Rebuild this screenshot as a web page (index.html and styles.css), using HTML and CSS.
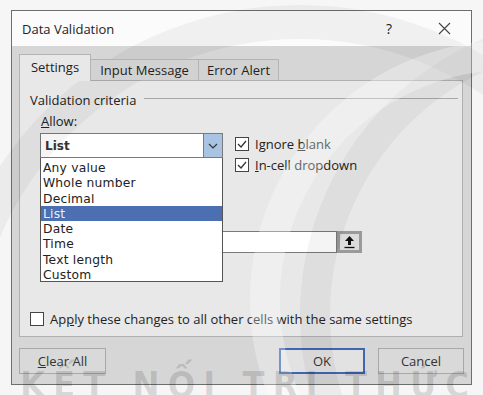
FILE: index.html
```html
<!DOCTYPE html>
<html>
<head>
<meta charset="utf-8">
<title>Data Validation</title>
<link rel="stylesheet" href="styles.css">
</head>
<body>
<div class="page">
<div class="dialog">
  <div class="titlebar">
    <span class="title">Data Validation</span>
    <span class="help">?</span>
    <span class="close"><svg width="13" height="13" viewBox="0 0 13 13"><path d="M1 1L12 12M12 1L1 12" stroke="#444" stroke-width="1.1" fill="none"/></svg></span>
  </div>
  <div class="body">
    <div class="tabs">
      <div class="tab active">Settings</div>
      <div class="tab">Input Message</div>
      <div class="tab">Error Alert</div>
    </div>
    <div class="panel">
      <div class="group-head"><span class="group-title">Validation criteria</span><span class="rule"></span></div>
      <div class="allow-label"><u>A</u>llow:</div>
      <div class="allow-row">
        <div class="combo-wrap">
          <div class="combo">
            <span class="combo-text">List</span>
            <span class="combo-btn"><svg width="10" height="6" viewBox="0 0 10 6"><path d="M1 1L5 5L9 1" stroke="#333" stroke-width="1.2" fill="none"/></svg></span>
          </div>
          <ul class="list">
            <li>Any value</li>
            <li>Whole number</li>
            <li>Decimal</li>
            <li class="sel">List</li>
            <li>Date</li>
            <li>Time</li>
            <li>Text length</li>
            <li>Custom</li>
          </ul>
        </div>
        <div class="checks">
          <div class="check"><span class="box"><svg width="12" height="12" viewBox="0 0 12 12"><path d="M2 6L5 9L10 3" stroke="#333" stroke-width="1.3" fill="none"/></svg></span><span>Ignore <u>b</u>lank</span></div>
          <div class="check"><span class="box"><svg width="12" height="12" viewBox="0 0 12 12"><path d="M2 6L5 9L10 3" stroke="#333" stroke-width="1.3" fill="none"/></svg></span><span><u>I</u>n-cell dropdown</span></div>
        </div>
      </div>
      <div class="source-row">
        <div class="source-input"></div>
        <div class="ref-btn"><svg width="13" height="14" viewBox="0 0 13 14"><path d="M6.5 1L11 6H8V10H5V6H2Z" fill="#111"/><path d="M1.5 12.5H11.5" stroke="#111" stroke-width="1.3"/></svg></div>
      </div>
      <div class="check apply"><span class="box"></span><span>Ap<u>p</u>ly these changes to all other cells with the same settings</span></div>
    </div>
    <div class="footer">
      <div class="btn"><u>C</u>lear All</div>
      <div class="spacer"></div>
      <div class="btn ok">OK</div>
      <div class="btn cancel">Cancel</div>
    </div>
  </div>
</div>
<div class="arc arc1"></div>
<div class="arc arc2"></div>
<div class="arc arc3"></div>
<div class="watermark">KẾT NỐI TRI THỨC</div>
</div>
</body>
</html>
```

FILE: styles.css
```css
html, body {
  margin: 0;
  padding: 0;
}
body {
  background: #f6f6f6;
  font-family: "Open Sans", "Noto Sans", sans-serif;
  font-size: 13px;
  color: #222;
}
.page {
  position: relative;
  width: 483px;
  height: 395px;
  overflow: hidden;
  padding-top: 10px;
  box-sizing: border-box;
}
.dialog {
  margin: 0 0 0 11px;
  width: 461px;
  height: 375px;
  box-sizing: border-box;
  border: 1px solid #6e6e6e;
  background: #d6d6d6;
  display: flex;
  flex-direction: column;
}
.titlebar {
  height: 35px;
  background: #fbfbfb;
  display: flex;
  align-items: center;
  padding-left: 10px;
  font-size: 13px;
  color: #222;
}
.title { flex: 1; }
.help {
  width: 14px;
  margin-right: 38px;
  font-size: 14px;
}
.close {
  width: 13px;
  height: 13px;
  margin-right: 20px;
  display: flex;
}
.body {
  flex: 1;
  padding: 0 8px 0 7px;
  display: flex;
  flex-direction: column;
}
.tabs {
  margin-top: 8px;
  display: flex;
  align-items: flex-end;
  height: 26px;
  position: relative;
  z-index: 2;
}
.tab {
  height: 21px;
  box-sizing: border-box;
  border: 1px solid #b4b4b4;
  border-bottom: none;
  background: #d2d2d2;
  display: flex;
  align-items: center;
  justify-content: center;
  font-size: 13px;
  margin-left: -1px;
}
.tab:nth-child(2) { width: 109px; }
.tab:nth-child(3) { width: 81px; }
.tab.active {
  width: 72px;
  height: 27px;
  margin-bottom: -1px;
  margin-left: 0;
  background: #e8e8e8;
  padding-bottom: 2px;
}
.panel {
  height: 257px;
  box-sizing: border-box;
  border: 1px solid #b0b0b0;
  background: #e8e8e8;
  padding: 10px 4px 0 10px;
  display: flex;
  flex-direction: column;
}
.group-head {
  display: flex;
  align-items: center;
  height: 18px;
  font-size: 13px;
}
.rule {
  flex: 1;
  height: 1px;
  background: #a8a8a8;
  margin: -3px 0 0 8px;
}
.allow-label {
  margin: 4px 0 0 11px;
  height: 16px;
  line-height: 16px;
  font-size: 13px;
}
.allow-row {
  margin-top: 4px;
  display: flex;
  align-items: flex-start;
}
.combo-wrap {
  position: relative;
  margin-left: 10px;
  width: 183px;
}
.combo {
  height: 25px;
  box-sizing: border-box;
  border: 1px solid #7a7a7a;
  background: #fff;
  display: flex;
  align-items: stretch;
}
.combo-text {
  flex: 1;
  padding-left: 4px;
  display: flex;
  align-items: center;
  font-family: "DejaVu Sans", sans-serif;
  font-size: 12px;
  font-weight: bold;
  color: #333;
}
.combo-btn {
  width: 18px;
  background: #a9c3e2;
  border-left: 1px solid #5f80b3;
  display: flex;
  align-items: center;
  justify-content: center;
}
.list {
  position: absolute;
  left: 0;
  top: 25px;
  width: 183px;
  box-sizing: border-box;
  margin: 0;
  padding: 2px 0 0;
  list-style: none;
  border: 1px solid #555;
  border-top: none;
  background: #fff;
  height: 124px;
  z-index: 3;
}
.list li {
  height: 15.3px;
  line-height: 16px;
  padding-left: 2px;
  font-family: "DejaVu Sans", sans-serif;
  font-size: 12.3px;
  color: #222;
  letter-spacing: 0.2px;
}
.list li.sel {
  background: #4b6fb0;
  color: #e8eefa;
}
.checks {
  margin-left: 12px;
  display: flex;
  flex-direction: column;
}
.check {
  height: 21px;
  display: flex;
  align-items: center;
  font-size: 13px;
}
.box {
  width: 14px;
  height: 14px;
  box-sizing: border-box;
  border: 1px solid #444;
  background: #fff;
  margin-right: 6px;
  display: flex;
  align-items: center;
  justify-content: center;
}
.source-row {
  margin: 56px 0 0 11px;
  display: flex;
  height: 22px;
}
.source-input {
  width: 296px;
  box-sizing: border-box;
  border: 1px solid #7a7a7a;
  background: #fff;
}
.ref-btn {
  width: 25px;
  box-sizing: border-box;
  border: 3px solid #9a9a9a;
  background: #dcdcdc;
  display: flex;
  align-items: center;
  justify-content: center;
}
.apply {
  margin-top: 55px;
}
.footer {
  margin-top: 11px;
  display: flex;
  height: 26px;
}
.spacer { flex: 1; }
.btn {
  width: 87px;
  height: 26px;
  box-sizing: border-box;
  border: 1px solid #a8a8a8;
  background: #d9d9d9;
  display: flex;
  align-items: center;
  justify-content: center;
  font-size: 13px;
  color: #333;
}
.btn.ok {
  width: 86px;
  border: 2px solid #3f66b0;
  background: #e2e2e2;
}
.btn.cancel {
  width: 86px;
  margin-left: 13px;
  margin-right: -1px;
}
.arc {
  position: absolute;
  border-radius: 50%;
  pointer-events: none;
  box-sizing: border-box;
}
.arc1 {
  left: -60px;
  top: 5px;
  width: 720px;
  height: 720px;
  border: 34px solid rgba(0,0,0,0.045);
}
.arc2 {
  left: 300px;
  top: 15px;
  width: 600px;
  height: 600px;
  border: 30px solid rgba(0,0,0,0.045);
}
.arc3 {
  left: 250px;
  top: 40px;
  width: 520px;
  height: 520px;
  border: 30px solid rgba(255,255,255,0.3);
}
.watermark {
  position: absolute;
  left: 20px;
  top: 370px;
  font-family: "DejaVu Sans Condensed", "DejaVu Sans", sans-serif;
  font-weight: bold;
  font-size: 36px;
  line-height: 30px;
  letter-spacing: 8px;
  color: rgba(0,0,0,0.13);
  white-space: nowrap;
  pointer-events: none;
}
```
